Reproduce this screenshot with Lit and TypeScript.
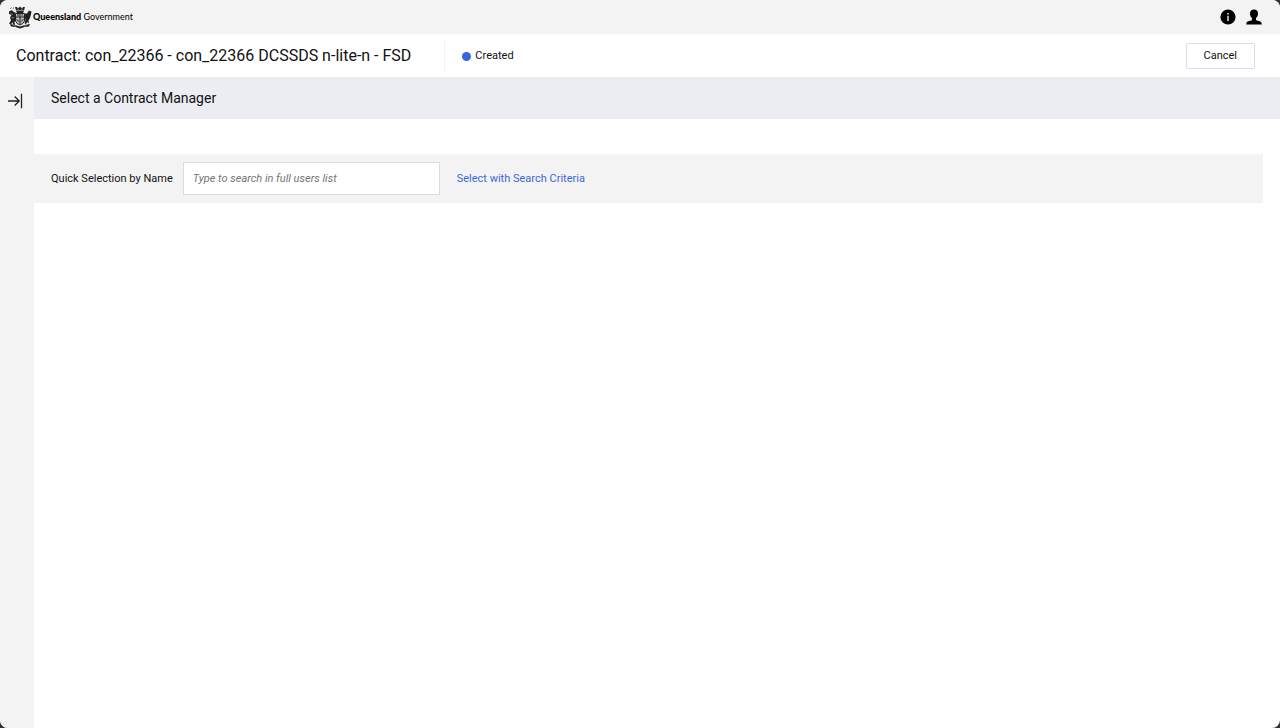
import { LitElement, html, css } from "lit";
import { customElement } from "lit/decorators.js";

@customElement("app-root")
export class AppRoot extends LitElement {
  static styles = css`
    :host {
      display: block;
      background: #333335;
      color: #111;
      font-family: Roboto, "Liberation Sans", sans-serif;
      font-size: 11px;
      line-height: 16px;
    }
    * {
      box-sizing: border-box;
    }
    button,
    input {
      font: inherit;
      color: inherit;
    }
    .window {
      display: flex;
      flex-direction: column;
      min-height: 100vh;
      border-radius: 8px;
      overflow: hidden;
      background: #fff;
    }
    .masthead {
      display: flex;
      align-items: center;
      justify-content: space-between;
      height: 34px;
      padding: 0 18px 0 8px;
      background: #f3f3f3;
    }
    .brand {
      display: flex;
      align-items: center;
      gap: 1px;
      color: #000;
      text-decoration: none;
      font-family: Lato, sans-serif;
      font-size: 9px;
    }
    .brand svg {
      width: 24px;
      height: 24px;
    }
    .brand b {
      font-weight: 900;
    }
    .tools {
      display: flex;
      gap: 10px;
    }
    .icon {
      display: flex;
      padding: 0;
      border: 0;
      background: none;
      color: #000;
    }
    .icon svg {
      width: 16px;
      height: 16px;
    }
    .titlebar {
      display: flex;
      align-items: center;
      height: 43px;
      padding: 1px 25px 0 16px;
    }
    .titlebar h1 {
      margin: 0;
      padding-right: 33px;
      font-size: 16px;
      line-height: 32px;
      font-weight: 400;
      border-right: 1px solid #f3f3f3;
    }
    .status {
      display: flex;
      align-items: center;
      gap: 4px;
      flex: 1;
      padding-left: 17px;
    }
    .dot {
      width: 9px;
      height: 9px;
      border-radius: 50%;
      background: #3367d9;
    }
    .cancel {
      height: 26px;
      padding: 0 17px;
      border: 1px solid #d9deec;
      border-radius: 2px;
      background: #fff;
    }
    .body {
      display: flex;
      flex: 1;
    }
    .rail {
      display: flex;
      justify-content: center;
      align-items: flex-start;
      width: 34px;
      padding: 16px 4px 0 0;
      background: #f3f3f3;
    }
    main {
      flex: 1;
    }
    .section {
      margin: 0 0 35px;
      padding: 0 17px;
      font-size: 14px;
      line-height: 42px;
      font-weight: 400;
      background: #ecedf3;
    }
    .picker {
      display: flex;
      align-items: center;
      margin-right: 17px;
      padding: 8px 17px;
      background: #f3f3f3;
    }
    .picker label,
    .link {
      line-height: 18px;
    }
    .search {
      width: 257px;
      height: 33px;
      margin: 0 17px 0 10px;
      padding: 0 9px;
      border: 1px solid #dcdcdc;
      border-radius: 0;
      background: #fff;
    }
    .search::placeholder {
      color: #757575;
      font-style: italic;
      opacity: 1;
    }
    .link {
      color: #3a68dc;
      text-decoration: none;
    }
  `;

  private crest() {
    return html`<svg viewBox="0 0 48 48" aria-hidden="true">
      <g fill="#222">
        <path d="M14 4h4l2 3 4-4 4 4 2-3h4l-2 7H16z" />
        <path d="M16 12h16l-2 4H18z" />
        <path d="M2 13l6-3 3 4 4 1-1 8 2 6-3 5 1 6-4-1-1-5-3 5-4-2 4-6-2-6 3-5-5-2z" />
        <path d="M47 13l-5-2-4 6-4 0-1 7 2 6-2 6 3 3 2-5 4 3-1-6 3-5 2-7z" />
        <path d="M4 38l10 2 10 3 10-3 10-2-2 5-9 1-9 3-9-3-9-1z" />
      </g>
      <path d="M15 17h18v15q-2 6-9 8-7-2-9-8z" fill="#bbb" stroke="#222" stroke-width="2" />
      <path d="M15 24h18M24 17v22M18 20h4M27 20h3M17 29l5 4M31 28l-5 5" stroke="#222" stroke-width="2" fill="none" />
      <path d="M5 17l5 2M7 26l5-1M19 7l2 3M28 7l-1 3M10 40l6 3M38 40l-6 3M4 8l3-3M10 8l1-3" stroke="#777" stroke-width="2" />
    </svg>`;
  }

  render() {
    return html`
      <div class="window">
        <header class="masthead">
          <a class="brand" href="#">
            ${this.crest()}
            <span><b>Queensland</b> Government</span>
          </a>
          <div class="tools">
            <button class="icon" aria-label="Information">
              <svg viewBox="0 0 16 16">
                <circle cx="8" cy="8" r="7.6" fill="currentColor" />
                <path d="M7.200 4h1.600v1.600H7.200zM7.200 6.800h1.600V12H7.200z" fill="#d5d5d5" />
              </svg>
            </button>
            <button class="icon" aria-label="User profile">
              <svg viewBox="0 0 16 16">
                <path d="M8 .5c2.500 0 4 1.500 4 4 0 2-.8 3.700-2 4.500v1.400c0 .5.300.8.800 1 3 .7 4.900 1.200 4.900 3.200v.9H.3v-.9c0-2 1.900-2.500 4.900-3.200.5-.2.800-.5.800-1V9C4.800 8.200 4 6.500 4 4.500c0-2.500 1.500-4 4-4z" fill="currentColor" />
              </svg>
            </button>
          </div>
        </header>
        <div class="titlebar">
          <h1>Contract: con_22366 - con_22366 DCSSDS n-lite-n - FSD</h1>
          <div class="status"><span class="dot"></span>Created</div>
          <button class="cancel">Cancel</button>
        </div>
        <div class="body">
          <nav class="rail" aria-label="Side panel">
            <button class="icon" aria-label="Expand panel">
              <svg viewBox="0 0 16 16" fill="none" stroke="#222" stroke-width="1.300">
                <path d="M1 8h11M7.700 3.500 12.200 8l-4.500 4.500M14.500 .8v14.400" />
              </svg>
            </button>
          </nav>
          <main>
            <h2 class="section">Select a Contract Manager</h2>
            <div class="picker">
              <label for="user">Quick Selection by Name</label>
              <input id="user" class="search" type="text" placeholder="Type to search in full users list" />
              <a class="link" href="#">Select with Search Criteria</a>
            </div>
          </main>
        </div>
      </div>
    `;
  }
}
